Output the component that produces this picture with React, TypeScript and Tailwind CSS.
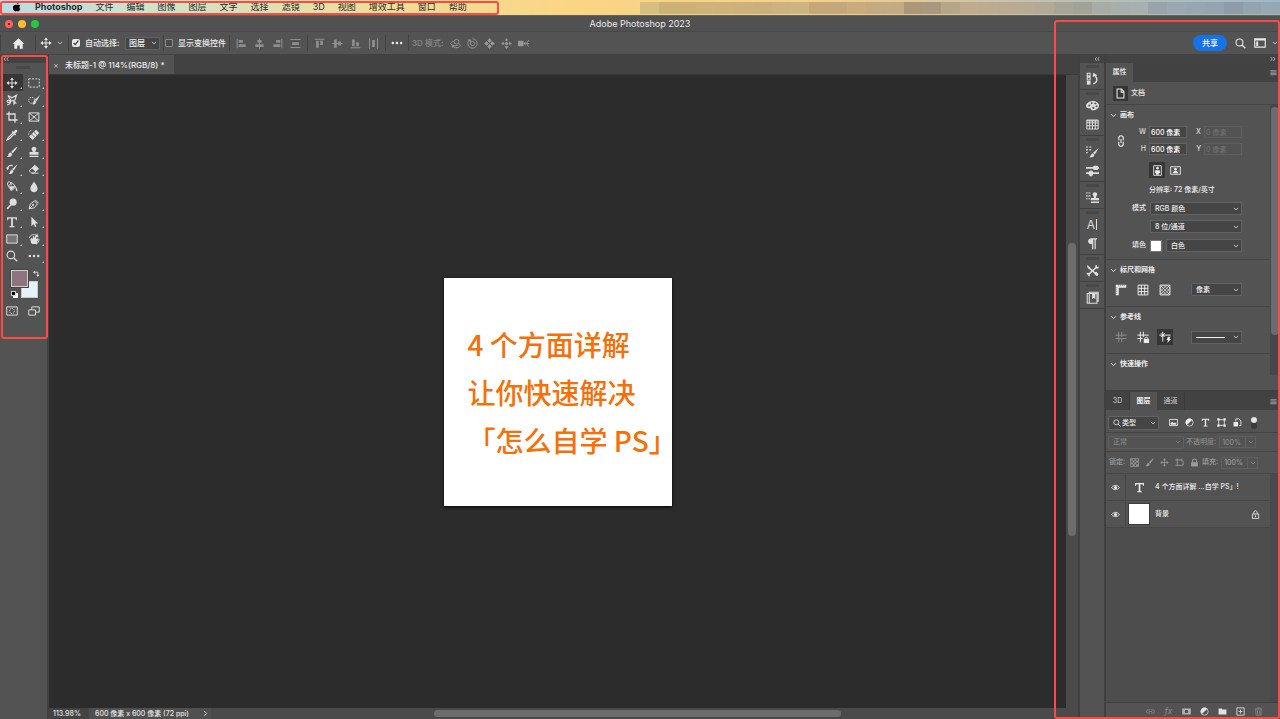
import type { ReactNode } from "react";
import clsx from "clsx";

interface IconProps {
  size?: string;
  className?: string;
  children: ReactNode;
}

function Icon({ size = "size-3", className, children }: IconProps) {
  return (
    <svg
      viewBox="0 0 16 16"
      className={clsx("block shrink-0", size, className)}
      fill="none"
      stroke="currentColor"
      strokeWidth="1.3"
      aria-hidden="true"
    >
      {children}
    </svg>
  );
}

const S = { fill: "currentColor", stroke: "none" };

// shapes, all on a 16x16 grid
const shapes = {
  apple: (
    <g {...S}>
      <path d="M11.8 8.400c0-1.500 1.100-2.200 1.700-2.600-1-1.400-2.500-1.600-3-1.600-1.100 0-1.900.6-2.500.6-.6 0-1.300-.6-2.300-.6C3.200 4.200 1.500 5.800 1.500 8.700c0 3 2.100 6.300 3.800 6.300.9 0 1.300-.6 2.400-.6 1.100 0 1.400.6 2.300.6 1.600 0 2.900-2.600 3.300-3.700-1-.5-1.500-1.600-1.500-2.900z" />
      <path d="M9.700 3.100c.6-.7.9-1.600.8-2.500-1.400.1-3 1.400-2.800 3.300.8 0 1.500-.3 2-.8z" />
    </g>
  ),
  home: <path {...S} d="M8 1.500 0.800 8.300h2v6.200h3.700v-4h3v4h3.700V8.300h2z" />,
  move: (
    <g>
      <path d="M8 3v10M3 8h10" />
      <path {...S} d="M8 .5 10.600 4H5.400zM8 15.500 10.600 12H5.400zM.5 8 4 5.400v5.200zM15.500 8 12 5.400v5.200z" />
    </g>
  ),
  marquee: <path strokeDasharray="2.600 1.800" d="M1 2.500h14v11H1z" />,
  lasso: (
    <g>
      <path strokeWidth="1.500" d="M2.500 2 8 5l6-3.500-2 6.500-5 1.500L2.500 2M7 9.500c-2 2.500-5 2-5.500.5S4 7 5.500 9.500 4 14.500 1.500 14.500" />
      <path {...S} d="M9.500 7.500l5.500 5-2.700.2L10 15z" />
    </g>
  ),
  quickSelect: (
    <g>
      <circle cx="5" cy="8.500" r="4" strokeDasharray="1.800 1.300" />
      <path {...S} d="M16 1.500 11.500 9.500 9 7.500zM8.500 8l2.500 2c-.3 3.500-3 4.500-5.500 3.800C7.300 12.500 7 9.500 8.500 8z" />
    </g>
  ),
  crop: <path strokeWidth="1.700" d="M4 .5V12h11.500M.5 4H12v11.500" />,
  frame: <path d="M1.500 2.500h13v11h-13zM1.500 2.500l13 11M14.500 2.500l-13 11" />,
  eyedropper: (
    <g>
      <path strokeWidth="1.500" d="M9 5.500 3 11.500 1.500 14.500 4.500 13l6-6" />
      <path {...S} d="M7.500 4l1.500-1.500 1.300 1.200 1.800-2.300c1.800-1.500 4 .8 2.500 2.500L12.300 5.700l1.200 1.300L12 8.500z" />
    </g>
  ),
  heal: (
    <g>
      <path {...S} d="M10.800 1 15 5.200 6.200 14.500 1.500 10z" />
      <path stroke="#535353" strokeWidth="1" d="M7.600 3.900l4.400 4.400M4.700 6.800l4.400 4.400" />
      <path strokeDasharray="1.500 1.300" d="M1 7.500C.5 4 3 1.500 6 1.500" />
    </g>
  ),
  brush: (
    <path {...S} d="M15.200.8c.8.7-4.600 7.600-6.400 9L7 8C8.400 6.200 14.400.1 15.200.8zM6.300 8.700l1.900 1.900c.2 3.200-3.400 4.700-7 3.800 2-.7 1.600-2 2.200-3.700.4-1.300 1.700-2 2.900-2z" />
  ),
  stamp: (
    <path {...S} d="M8 1c2 0 3.200 1.300 3.200 2.900 0 1.700-1.600 2.100-1.600 4.100H14v3.500H2V8h4.400c0-2-1.600-2.400-1.600-4.100C4.800 2.300 6 1 8 1zM2 13h12v1.800H2z" />
  ),
  historyBrush: (
    <g>
      <path {...S} d="M15.500 1.500 10.500 10 8 8zM7.500 8.500l2.400 2c-.2 3.200-3 4.500-6.400 4 2-1 1.700-4.500 4-6z" />
      <path strokeWidth="1.500" d="M2 7.500C2.500 3.500 6 2.500 9 3.500" />
      <path {...S} d="M0 6l4.500 0L2 9.500z" />
    </g>
  ),
  eraser: (
    <g>
      <path d="M5 13.500 1.500 10.500 9 3l5 4.500-6 6zM5 13.500h9" />
      <path {...S} d="M9 3l5 4.500-4 4L5 7z" />
    </g>
  ),
  bucket: (
    <g>
      <path d="M3 6.500 8 2l5 6-6 5zM3 6.500C1 4 2 1 4 1s3 2 3 5" />
      <path {...S} d="M4 7h9l-6 5zM13 8c2 2 2.500 3.500 2 6-1.500-.5-2.500-3-2-6z" />
    </g>
  ),
  drop: <path {...S} d="M8 .8c1.500 3.200 4.800 5.600 4.800 9.200 0 3-2.200 5-4.800 5s-4.800-2-4.800-5C3.200 6.400 6.500 4 8 .8z" />,
  dodge: (
    <g>
      <circle {...S} cx="9.500" cy="5.500" r="4.700" />
      <path strokeWidth="2" d="M6.500 9 1.500 14.500" />
    </g>
  ),
  pen: (
    <g>
      <path d="M1.500 14.500 3 8l5.500-4 4 4L8.500 13zM1.500 14.500l5-5M9.500 2.500l4.500 4.500" />
      <circle {...S} cx="7" cy="9" r="1.300" />
    </g>
  ),
  type: <path {...S} d="M1.500 1.500h13V5.500h-1.200L12.500 3.200H9.200v10l2.300.5v1.300h-7v-1.300l2.300-.5v-10H3.500L2.700 5.500H1.500z" />,
  pathArrow: <path {...S} d="M4.500 1v12.500l3-2.700 1.800 4 2-.9-1.800-3.900h4z" />,
  rectangle: <path fill="#777" d="M1 2.500h14v11H1z" />,
  rotate: (
    <g>
      <path {...S} d="M4 13 3 8l2-1.500L6.500 8V4.500L8 4l1 3 .5-3.200L11 4v4l2-1 .8 1-2.300 6.500H5.500z" />
      <path d="M2 6.500C3 2 8 1 12 3.500M14.500 7.500c.5 3-1 6-3.500 7.500" />
      <path {...S} d="M12.500.5l1.500 5L9.500 5z" />
    </g>
  ),
  zoom: (
    <g>
      <circle cx="6.500" cy="6.500" r="5" strokeWidth="1.500" />
      <path strokeWidth="1.800" d="M10.200 10.200 15 15" />
    </g>
  ),
  dots: (
    <g {...S}>
      <circle cx="2.500" cy="8" r="1.700" />
      <circle cx="8" cy="8" r="1.700" />
      <circle cx="13.500" cy="8" r="1.700" />
    </g>
  ),
  swap: (
    <g>
      <path strokeWidth="2" d="M4 5h7v7" />
      <path {...S} d="M5 1v8L0 5zM7 11h8l-4 5z" />
    </g>
  ),
  quickMask: (
    <g>
      <path d="M1 2.500h14v11H1z" />
      <circle cx="8" cy="8" r="3.300" strokeDasharray="1.500 1" />
    </g>
  ),
  screenMode: (
    <g>
      <path d="M5 2.500h10v7H5z" />
      <path fill="#535353" d="M1 6.500h9v7H1z" />
    </g>
  ),
  chevron: <path strokeWidth="2" d="M2.500 5 8 10.500 13.500 5" />,
  alignLeft: <path {...S} d="M1 1h1.500v14H1zM4 3h6v4H4zM4 9h10v4H4z" />,
  alignCenter: <path {...S} d="M7.300.5h1.400V3H11v4H8.700v2H14v4H8.700v2.500H7.300V13H2V9h5.300V7H5V3h2.300z" />,
  alignRight: <path {...S} d="M13.500 1H15v14h-1.500zM6 3h6v4H6zM2 9h10v4H2z" />,
  distribute: <path {...S} d="M.5 1.500h15V3H.5zM3 6h10v4H3zM.5 13h15v1.500H.5z" />,
  alignTop: <path {...S} d="M1 1h14v1.500H1zM3 4h4v10H3zM9 4h4v6H9z" />,
  alignMiddle: <path {...S} d="M.5 7.300H3V2h4v5.300h2V5h4v2.300h2.500v1.400H13V11H9V8.700H7V14H3V8.700H.5z" />,
  alignBottom: <path {...S} d="M1 13.500h14V15H1zM3 2h4v10H3zM9 6h4v6H9z" />,
  distributeV: <path {...S} d="M1.500.5H3v15H1.500zM6 3h4v10H6zM13 .5h1.500v15H13z" />,
  orbit3d: (
    <g>
      <circle cx="9.500" cy="5.500" r="3.500" />
      <path d="M5.500 5C1 6 0 8 2 9.500s5 2.500 9 1.500M12.500 8c3 1.500 3 4.500 0 5.500s-5 1-8-1" />
      <path {...S} d="M3 14.500 2.500 10l4 1.500z" />
    </g>
  ),
  roll3d: (
    <g>
      <circle cx="8" cy="8" r="3" />
      <path d="M3.200 3.200A6.800 6.800 0 1 0 8 1.200" />
      <path {...S} d="M0.500 2h5v4.500z" />
    </g>
  ),
  pan3d: (
    <path fill="currentColor" d="M8 .8 10.500 4 8 6.500 5.500 4zM8 9.500l2.500 2.500L8 15.200 5.500 12zM.8 8 4 5.500 6.500 8 4 10.500zM9.500 8 12 5.500 15.200 8 12 10.500z" />
  ),
  slide3d: (
    <g>
      <circle {...S} cx="8" cy="8" r="2.200" />
      <path d="M8 3v10M2 8h12" strokeDasharray="2 1" />
      <path {...S} d="M8 0l2.500 3.500h-5zM8 16l3-4H5zM0 8l4-2.500v5zM16 8l-4-2.500v5z" />
    </g>
  ),
  camera3d: (
    <g>
      <path {...S} d="M0 4h8v8H0zM8 8l3-3v6z" />
      <path d="M15.500 3 12.500 8l3 5M12.500 8H16" />
    </g>
  ),
  workspace: (
    <g>
      <path strokeWidth="1.500" d="M1 2.500h14v11H1zM1 4h14" />
      <path {...S} d="M3 6h2.500v6H3z" />
    </g>
  ),
  history: (
    <g>
      <path d="M1.500 1.500H5V5H1.500zM1.500 6.300H5v3.500H1.500z" />
      <path {...S} d="M1 11h4.600v4.500H1z" />
      <path strokeWidth="1.800" d="M9 14.500c5-1.500 5.500-6 2.500-9.500" />
      <path {...S} d="M8 6 9 1l5 3z" />
    </g>
  ),
  palette: (
    <g>
      <path {...S} d="M8 2.500c4.500 0 8 2.200 8 5.500s-3.500 6-8 6c-2 0-1.500-2.500-3.500-2.500S0 11 0 8.500s3.500-6 8-6z" />
      <g fill="#535353" stroke="none">
        <circle cx="4" cy="8" r="1.200" />
        <circle cx="7" cy="5.200" r="1.200" />
        <circle cx="11.500" cy="5.400" r="1.200" />
        <circle cx="13" cy="8.800" r="1.200" />
        <circle cx="9" cy="10.800" r="1.400" />
      </g>
    </g>
  ),
  swatches: <path strokeWidth="1.200" d="M1 2.500h14v11H1zM1 6h14M1 9.500h14M4.500 2.500v11M8 2.500v11M11.500 2.500v11M1 3.500h14" />,
  brushSettings: (
    <g>
      <path d="M0 2.500h2.500M0 6h2.500M0 9.500h2.500M4 2.500h2.500M4 6h2.500" />
      <path {...S} d="M16 3.500 11 11.500l-2.500-2zM8 10l2.500 2c-.5 3-4 3.700-6.500 3.300 1.800-1.200 1.800-4.300 4-5.300z" />
    </g>
  ),
  brushes: (
    <path {...S} d="M0 3.800h8L10 2h4l2 2v1.500l-2 2h-4L8 5.800H0zM0 10.200h3L5 8h2.500L9 10.200h7v2H9L7.500 15H5l-2-2.800H0z" />
  ),
  cloneSource: (
    <g>
      <path d="M0 2.500h2M0 6h2M0 9.500h2M3 2.500h2.500M3 6h2.500M3 9.500h2" />
      <path {...S} d="M11 1.500c1.700 0 2.800 1.200 2.800 2.500 0 1.500-1.500 2-1.500 4.500H16v3H6v-3h3.700C9.700 6 8.200 5.500 8.200 4c0-1.300 1.100-2.500 2.800-2.500zM6 13h10v1.800H6z" />
    </g>
  ),
  paragraph: <path {...S} d="M7 1.500h6.500V3H12v12h-1.500V3H9v12H7.500V9C4.500 9 2.500 7.500 2.500 5.200S4.500 1.500 7 1.500z" />,
  toolPresets: (
    <g>
      <path strokeWidth="1.800" d="M2 3l9.500 8.500M13 4 3.500 12.500" />
      <path {...S} d="M1 1l3 2.500L6 8 2.500 5zM11 10l2-.5L15.500 13 13.500 15 10.500 12.500z" />
      <path strokeWidth="2" d="M12.500 1.500v3H15.500M1 12.500c2-1.500 3.500 0 2.500 2.500" />
    </g>
  ),
  libraries: (
    <g>
      <path d="M4 2.500V1.500h11v11h-1M1.500 3h12v12h-12zM4 3v12" />
      <path {...S} d="M7.500 3.500h4V10l-2-1.700-2 1.700z" />
    </g>
  ),
  page: <path strokeWidth="1.500" d="M3 1.500h6.500l3.500 4v9H3zM9 1.500V6h4" />,
  link: (
    <path strokeWidth="1.500" d="M5 7V4a3 3 0 0 1 6 0v3M5 9v3a3 3 0 0 0 6 0V9M8 5.500v5" />
  ),
  portrait: (
    <g>
      <path d="M2.500 1h11v14h-11z" />
      <circle {...S} cx="8" cy="4.700" r="2" />
      <path {...S} d="M4.500 7.500h7V12H10v2H6v-2H4.500z" />
    </g>
  ),
  landscape: (
    <g>
      <path d="M1 2.500h14v11H1z" />
      <circle {...S} cx="8" cy="6" r="2" />
      <path {...S} d="M4 12c0-5 8-5 8 0z" />
    </g>
  ),
  ruler: (
    <g>
      <path {...S} d="M1 1h14v4H5v10H1z" />
      <path stroke="#535353" strokeWidth=".8" d="M5 1v2M7.500 1v2M10 1v2M12.500 1v2M1 5h2M1 7.500h2M1 10h2M1 12.500h2" />
    </g>
  ),
  grid: <path d="M1.500 1.500h13v13h-13zM1.500 5.800h13M1.500 10.200h13M5.800 1.500v13M10.200 1.500v13" />,
  pixelGrid: (
    <g>
      <path d="M1.500 1.500h13v13h-13z" />
      <path strokeWidth=".9" d="M1.500 5.500l4-4M1.500 10l8.500-8.500M1.500 14.500l13-13M6 14.500 14.500 6M10.500 14.500l4-4M5.500 14.500l-4-4M10 14.500 1.500 6M14.500 14.500l-13-13M14.500 10 6 1.500M14.500 5.500l-4-4" />
    </g>
  ),
  guides: <path d="M5 1v14M9 1v7M9 10.500V15M.5 5.500h15M.5 10h15" />,
  guidesLock: (
    <g>
      <path d="M4.500 1v14M8.500 1v7M.5 5.500h15M.5 10h7" />
      <path {...S} d="M9 10.500h7V16H9z" />
      <path d="M10.500 10.500c0-3 4-3 4 0" />
    </g>
  ),
  smartGuides: (
    <g>
      <path d="M5 1v13M.5 5.500h15M2.500 3l5 5M7.500 3l-5 5" />
      <path {...S} d="M12 7.500h3.500l-1.500 3h2L11 16l1-4h-2z" />
    </g>
  ),
  image: (
    <g>
      <path strokeWidth="1.500" d="M1 2.500h14v11H1z" />
      <path {...S} d="M3 12V9l3-2.500 2.500 3L11 8l2 2v2z" />
    </g>
  ),
  adjust: (
    <g>
      <circle cx="8" cy="8" r="6.500" />
      <path {...S} d="M12.600 3.400A6.500 6.500 0 1 0 3.400 12.600z" />
    </g>
  ),
  shape: (
    <g>
      <path strokeWidth="1.500" d="M3 3h10v10H3z" />
      <path {...S} d="M.5.5h4v4h-4zM11.500.5h4v4h-4zM.5 11.500h4v4h-4zM11.500 11.500h4v4h-4z" />
    </g>
  ),
  smartObject: (
    <g>
      <path strokeWidth="1.500" d="M5 6V1.500h5.500L14 5v8.500h-3" />
      <path {...S} d="M1 7h8v8H1z" />
    </g>
  ),
  checker: (
    <g>
      <path d="M1 1h14v14H1z" />
      <path {...S} d="M2 2h3v3H2zM8 2h3v3H8zM5 5h3v3H5zM11 5h3v3h-3zM2 8h3v3H2zM8 8h3v3H8zM5 11h3v3H5zM11 11h3v3h-3z" />
    </g>
  ),
  artboard: <path strokeWidth="1.500" d="M4 .5V13M.5 3.500H12l2.500 3V13H1M12 .5v6" />,
  lockFill: (
    <g>
      <path strokeWidth="1.800" d="M4.500 8V5c0-4.500 7-4.500 7 0v3" />
      <path {...S} d="M2 7.500h12V15H2z" />
    </g>
  ),
  lock: (
    <g>
      <path strokeWidth="1.500" d="M5 7V4.500c0-4 6-4 6 0V7M2.500 7h11v8h-11z" />
      <path {...S} d="M7 9.500h2v3H7z" />
    </g>
  ),
  eye: (
    <g>
      <path strokeWidth="1.600" d="M1 8c3.500-5 10.500-5 14 0-3.500 5-10.500 5-14 0z" />
      <circle {...S} cx="8" cy="8" r="2.700" />
    </g>
  ),
  chain: (
    <path strokeWidth="1.500" d="M7 5H4a3 3 0 0 0 0 6h3M9 5h3a3 3 0 0 1 0 6H9M5 8h6" />
  ),
  mask: (
    <path {...S} fillRule="evenodd" d="M.5 2.500h15v11H.5zM8 4.700a3.300 3.300 0 1 0 0 6.600 3.300 3.300 0 0 0 0-6.600z" />
  ),
  folder: <path {...S} d="M1 2.500h5.500L8 4.500h7v9H1z" />,
  plus: <path strokeWidth="1.500" d="M1.500 1.500h13v13h-13zM8 4.500v7M4.500 8h7" />,
  trash: <path strokeWidth="1.500" d="M1.500 3.500h13M5.500 3V1.500h5V3M3 4l.7 10.500h8.600L13 4M6.200 6v6M9.800 6v6" />,
  hamburger: <path {...S} d="M1 3h14v2H1zM1 6h14v2H1zM1 9h14v2H1zM1 12h14v2H1z" />,
  doubleLeft: <path strokeWidth="1.800" d="M7 3 3 8l4 5M14 3l-4 5 4 5" />,
  doubleRight: <path strokeWidth="1.800" d="M2 3l4 5-4 5M9 3l4 5-4 5" />,
};

type ShapeName = keyof typeof shapes;

interface IconButtonProps {
  name: ShapeName;
  label: string;
  className?: string;
  size?: string;
}

function IconButton({ name, label, className, size }: IconButtonProps) {
  return (
    <button type="button" aria-label={label} className={clsx("flex shrink-0 items-center justify-center", className)}>
      <Icon size={size}>{shapes[name]}</Icon>
    </button>
  );
}

interface DropdownProps {
  label: string;
  value: string;
  className?: string;
  pad?: string;
  disabled?: boolean;
}

function Dropdown({ label, value, className, pad = "pl-1", disabled }: DropdownProps) {
  return (
    <span className={clsx("relative flex shrink-0 rounded-[1px] border", disabled ? "border-[#5f5f5f] text-[#858585]" : "border-[#626262] bg-[#454545] text-[#f0f0f0]", className)}>
      <select aria-label={label} disabled={disabled} className={clsx("w-full appearance-none leading-[10px] outline-none", pad)}>
        <option>{value}</option>
      </select>
      <Icon size="size-[6px]" className="pointer-events-none absolute top-0 right-[2px] bottom-0 my-auto">
        {shapes.chevron}
      </Icon>
    </span>
  );
}

const menus = ["文件", "编辑", "图像", "图层", "文字", "选择", "滤镜", "3D", "视图", "增效工具", "窗口", "帮助"];

const mosaic = [
  "bg-[#d5bf80]", "bg-[#cdb277]", "bg-[#ceb175]", "bg-[#cfb379]", "bg-[#ceb27a]", "bg-[#cdb07a]",
  "bg-[#cab07d]", "bg-[#cbb280]", "bg-[#cdb483]", "bg-[#c6a878]", "bg-[#c4a87b]", "bg-[#c8ac7e]",
  "bg-[#c4aa80]", "bg-[#c4ab84]", "bg-[#ac967a]", "bg-[#a9977f]", "bg-[#b7a588]", "bg-[#bfac8c]",
  "bg-[#bcab90]", "bg-[#b9aa91]", "bg-[#b7ab94]", "bg-[#b2a996]", "bg-[#a8a497]", "bg-[#a2a297]",
  "bg-[#a9aba5]", "bg-[#a8aeab]", "bg-[#a7afaf]", "bg-[#98a3aa]", "bg-[#9ca8b1]", "bg-[#98a6b1]",
  "bg-[#94a3ae]", "bg-[#8e9ca9]", "bg-[#93a3af]", "bg-[#97a8b4]",
];

function MenuBar() {
  return (
    <nav className="relative flex h-4 shrink-0 items-start border-b border-[#686351] bg-[linear-gradient(to_right,#b6dde6,#cfe3ca_12%,#f0dd98_30%,#fbd584_45%,#f3cf8b_65%,#bdbfb0_82%,#9db9c9)] text-[9px] leading-[14px] text-[#25292b]">
      <div className="flex w-1/2 shrink-0 items-center pl-3">
        <Icon size="size-[10px]" className="mr-[13px] text-black">{shapes.apple}</Icon>
        <a href="#photoshop" className="mr-[13px] font-bold">Photoshop</a>
        <div className="flex gap-[13px]">
          {menus.map((menu) => (
            <a key={menu} href={`#${menu}`} className="whitespace-nowrap">{menu}</a>
          ))}
        </div>
      </div>
      <div className="mt-[2px] ml-auto flex h-[12px] w-[650px]">
        {mosaic.map((color) => (
          <span key={color} className={clsx("flex-1", color)} />
        ))}
      </div>
      <div className="absolute top-px left-0 h-[14px] w-[499px] rounded-[3px] border-2 border-[#fb4b46]" />
    </nav>
  );
}

function TitleBar() {
  return (
    <header className="relative flex h-4 shrink-0 items-center justify-center border-b border-[#484848] bg-[#515151] text-[9px] text-[#ececec]">
      <div className="absolute left-[5px] flex gap-[5px]">
        <button type="button" aria-label="关闭" className="flex size-2 items-center justify-center rounded-full bg-[#ff5f57]">
          <span className="size-[2px] rounded-full bg-[#7a1512]" />
        </button>
        <button type="button" aria-label="最小化" className="size-2 rounded-full bg-[#febc2e]" />
        <button type="button" aria-label="缩放" className="size-2 rounded-full bg-[#28c840]" />
      </div>
      <h1>Adobe Photoshop 2023</h1>
    </header>
  );
}

function Divider() {
  return <span className="h-4 w-px shrink-0 bg-[#434343]" />;
}

interface IconRowProps {
  names: ShapeName[];
  color?: string;
  cell?: string;
}

function IconRow({ names, color = "text-[#8e8e8e]", cell = "w-[18px]" }: IconRowProps) {
  return (
    <div className={clsx("flex", color)}>
      {names.map((name) => (
        <IconButton key={name} name={name} label={name} className={cell} size="size-[11px]" />
      ))}
    </div>
  );
}

function OptionsBar() {
  return (
    <div className="flex h-[23px] shrink-0 items-center border-b border-[#434343] bg-[#535353] text-[8px] font-medium text-[#eaeaea]">
      <Divider />
      <IconButton name="home" label="主页" className="w-[34px]" size="size-[13px]" />
      <Divider />
      <IconButton name="move" label="移动工具" className="w-[20px]" />
      <IconButton name="chevron" label="预设" className="mr-1 w-2" size="size-[6px]" />
      <Divider />
      <label className="flex w-[54px] items-center gap-[5px] pl-[3px] whitespace-nowrap">
        <input type="checkbox" defaultChecked className="size-2 accent-[#eaeaea]" />
        自动选择:
      </label>
      <Dropdown label="自动选择" value="图层" className="ml-[2px] h-[13px] w-[35px]" pad="pl-[3px]" />
      <span className="w-[3px]" />
      <Divider />
      <label className="flex w-[65px] items-center gap-[5px] pl-px whitespace-nowrap">
        <input type="checkbox" className="size-2 appearance-none rounded-[1px] border border-[#8b8b8b] bg-[#484848]" />
        显示变换控件
      </label>
      <Divider />
      <div className="flex w-[77px] pl-[2px]">
        <IconRow names={["alignLeft", "alignCenter", "alignRight", "distribute"]} />
      </div>
      <Divider />
      <div className="flex w-[77px] pl-[2px]">
        <IconRow names={["alignTop", "alignMiddle", "alignBottom", "distributeV"]} />
      </div>
      <Divider />
      <IconButton name="dots" label="更多" className="w-[22px]" />
      <Divider />
      <span className="w-[38px] pl-[3px] whitespace-nowrap text-[#8a8a8a]">3D 模式:</span>
      <IconRow names={["orbit3d", "roll3d", "pan3d", "slide3d", "camera3d"]} color="text-[#989898]" cell="w-[17px]" />
      <div className="ml-auto flex items-center">
        <button type="button" className="mr-[8px] h-4 w-[34px] rounded-full bg-[#1473e6] text-[8px] font-medium text-white">共享</button>
        <IconButton name="zoom" label="搜索" size="size-[11px]" className="mr-[8px]" />
        <IconButton name="workspace" label="工作区" className="mr-[6px]" />
        <IconButton name="chevron" label="工作区选项" size="size-[6px]" className="mr-[2px]" />
      </div>
    </div>
  );
}

const tools: [ShapeName, string][] = [
  ["move", "移动工具"], ["marquee", "矩形选框工具"],
  ["lasso", "套索工具"], ["quickSelect", "快速选择工具"],
  ["crop", "裁剪工具"], ["frame", "图框工具"],
  ["eyedropper", "吸管工具"], ["heal", "修复画笔工具"],
  ["brush", "画笔工具"], ["stamp", "仿制图章工具"],
  ["historyBrush", "历史记录画笔工具"], ["eraser", "橡皮擦工具"],
  ["bucket", "油漆桶工具"], ["drop", "模糊工具"],
  ["dodge", "减淡工具"], ["pen", "钢笔工具"],
  ["type", "文字工具"], ["pathArrow", "路径选择工具"],
  ["rectangle", "矩形工具"], ["rotate", "旋转视图工具"],
  ["zoom", "缩放工具"], ["dots", "编辑工具栏"],
];

// small triangle marking a tool group with hidden tools
function Corner() {
  return (
    <svg viewBox="0 0 3 3" className="absolute right-px bottom-[2px] size-[2px] fill-[#c4c4c4]" aria-hidden="true">
      <path d="M3 0v3H0z" />
    </svg>
  );
}

function Toolbar() {
  return (
    <aside className="relative flex w-[49px] shrink-0 flex-col border-r-2 border-[#404040] bg-[#535353] text-[#dedede]">
      <div className="flex h-[8px] items-center bg-[#434343] pl-[3px]">
        <Icon size="size-[6px]">{shapes.doubleLeft}</Icon>
      </div>
      <div className="mt-[3px] ml-4 h-[3px] w-[14px] bg-[#484848]" />
      <div className="mt-[5px] ml-px grid h-[191px] w-[44px] grid-cols-2 grid-rows-11">
        {tools.map(([name, label], index) => (
          <button
            key={name}
            type="button"
            aria-label={label}
            className={clsx("relative flex items-center justify-center rounded-[1px]", index === 0 && "bg-[#363636]")}
          >
            <Icon>{shapes[name]}</Icon>
            {name !== "frame" && name !== "zoom" && <Corner />}
          </button>
        ))}
      </div>
      <div className="relative mt-[5px] ml-[10px] h-[28px] w-[30px]">
        <button type="button" aria-label="背景色" className="absolute right-[2px] bottom-0 size-[17px] border border-[#c4cccf] bg-[#e3f3f8]" />
        <button type="button" aria-label="前景色" className="absolute top-0 left-px size-[17px] border border-[#cfcfcf] bg-[#8e747f] outline outline-[#444]" />
        <Icon size="size-[7px]" className="absolute top-0 right-0">{shapes.swap}</Icon>
        <span className="absolute bottom-0 left-[3px] size-[5px] bg-white" />
        <span className="absolute bottom-[2px] left-px size-[5px] border border-[#d0d0d0] bg-black" />
      </div>
      <div className="mt-[6px] ml-px grid h-[14px] w-[44px] grid-cols-2">
        <IconButton name="quickMask" label="快速蒙版" />
        <IconButton name="screenMode" label="屏幕模式" />
      </div>
      <div className="absolute top-0 left-px h-[284px] w-[47px] rounded-[3px] border-2 border-[#fb4b46]" />
    </aside>
  );
}

function DocumentArea() {
  return (
    <main className="flex min-w-0 flex-1 flex-col bg-[#424242]">
      <div className="flex h-5 shrink-0 border-b border-[#393939]">
        <div className="flex items-center bg-[#535353] pr-[9px] pl-[3px] text-[8px] font-medium whitespace-nowrap text-[#f0f0f0]">
          <button type="button" aria-label="关闭文档" className="w-[13px] pr-[5px] text-[#b5b5b5]">×</button>
          未标题-1 @ 114%(RGB/8) *
        </div>
      </div>
      <div className="flex min-h-0 flex-1">
        <div className="flex flex-1 items-center justify-center bg-[#2c2c2c]">
          <div className="size-[228px] bg-white pt-[42px] pl-[24px] font-['Noto_Sans_CJK_SC',sans-serif] text-[28px] leading-[48px] font-medium whitespace-nowrap text-[#f5700a] shadow-[0_1px_3px_#000]">
            <p>4 个方面详解</p>
            <p>让你快速解决</p>
            <p>「怎么自学 PS」</p>
          </div>
        </div>
        <div className="flex w-3 shrink-0 flex-col bg-[#4a4a4a] px-[2px]">
          <span className="flex-168" />
          <span className="flex-293 rounded-full bg-[#6c6c6c]" />
          <span className="flex-172" />
        </div>
      </div>
      <footer className="flex h-[11px] shrink-0 items-center bg-[#4a4a4a] text-[7px] font-medium whitespace-nowrap text-[#e6e6e6]">
        <span className="w-10 bg-[#434343] pl-1 leading-[11px]">113.98%</span>
        <span className="flex w-[122px] justify-between bg-[#505050] pr-[2px] pl-[6px] leading-[11px]">
          600 像素 x 600 像素 (72 ppi)
          <Icon size="size-[7px]" className="my-auto -rotate-90">{shapes.chevron}</Icon>
        </span>
        <div className="flex h-[7px] flex-1">
          <span className="flex-223" />
          <span className="flex-407 rounded-full bg-[#6c6c6c]" />
          <span className="flex-237" />
        </div>
      </footer>
    </main>
  );
}

const dockGroups: (ShapeName | "character")[][] = [
  ["history"],
  ["palette", "swatches"],
  ["brushSettings", "brushes"],
  ["cloneSource"],
  ["character", "paragraph"],
  ["toolPresets"],
  ["libraries"],
];

function Dock() {
  return (
    <aside className="w-7 shrink-0 border-x-2 border-[#404040] bg-[#535353] text-[#dedede]">
      <div className="flex h-[8px] items-center justify-end bg-[#434343] pr-1">
        <Icon size="size-[6px]">{shapes.doubleLeft}</Icon>
      </div>
      {dockGroups.map((group) => (
        <div key={group[0]} className="border-b border-[#404040] pt-[2px] pb-px">
          <div className="mx-auto mb-px h-[3px] w-[13px] bg-[#484848]" />
          {group.map((name) =>
            name === "character" ? (
              <button key={name} type="button" aria-label="字符" className="flex h-[19px] w-full items-center justify-center text-[12px]">
                A<span className="ml-px h-[11px] w-px bg-current" />
              </button>
            ) : (
              <IconButton key={name} name={name} label={name} className="h-[19px] w-full" size="size-[13px]" />
            )
          )}
        </div>
      ))}
    </aside>
  );
}

function Section({ title, className, children }: { title: string; className?: string; children?: ReactNode }) {
  return (
    <section className={clsx("border-[#444]", className)}>
      <h2 className="flex h-[21px] items-center gap-[3px] pl-1 font-bold">
        <Icon size="size-[7px]">{shapes.chevron}</Icon>
        {title}
      </h2>
      {children}
    </section>
  );
}

function SizeField({ label, value, disabled }: { label: string; value: string; disabled?: boolean }) {
  return (
    <label className="flex items-center justify-end gap-[3px] text-[#dcdcdc]">
      {label}
      <input
        defaultValue={value}
        disabled={disabled}
        className={clsx("h-3 w-[38px] border pl-[1px] leading-[10px] outline-none", disabled ? "border-[#5f5f5f] text-[#707070]" : "border-[#626262] bg-[#454545] text-white")}
      />
    </label>
  );
}

function Properties() {
  return (
    <div className="flex h-[327px] shrink-0 flex-col">
      <div className="flex h-[19px] shrink-0 bg-[#424242]">
        <button type="button" className="w-[27px] bg-[#535353]">属性</button>
        <IconButton name="hamburger" label="面板菜单" size="size-[7px]" className="mr-[3px] ml-auto text-[#9c9c9c]" />
      </div>
      <div className="flex h-[23px] shrink-0 items-center gap-[3px] border-b border-[#444] pl-[7px]">
        <span className="flex size-[15px] items-center justify-center bg-[#363636]">
          <Icon size="size-[11px]">{shapes.page}</Icon>
        </span>
        文档
      </div>
      <div className="flex min-h-0 flex-1">
        <div className="flex-1">
          <Section title="画布" className="h-[155px] border-b">
            <div className="flex items-center">
              <span className="flex w-[30px] justify-center">
                <Icon>{shapes.link}</Icon>
              </span>
              <div className="grid grid-cols-[51px_55px] gap-y-[5px]">
                <SizeField label="W" value="600 像素" />
                <SizeField label="X" value="0 像素" disabled />
                <SizeField label="H" value="600 像素" />
                <SizeField label="Y" value="0 像素" disabled />
              </div>
            </div>
            <div className="mt-[7px] ml-[43px] flex gap-[2px]">
              <IconButton name="portrait" label="纵向" className="size-4 bg-[#363636]" size="size-[11px]" />
              <IconButton name="landscape" label="横向" className="size-4" size="size-[11px]" />
            </div>
            <p className="mt-[6px] ml-[43px] leading-[12px]">分辨率: 72 像素/英寸</p>
            <div className="mt-[6px] ml-[26px] flex items-center gap-1">
              模式
              <Dropdown label="模式" value="RGB 颜色" className="h-[13px] w-[92px]" />
            </div>
            <div className="mt-[5px] ml-[44px]">
              <Dropdown label="位深度" value="8 位/通道" className="h-[13px] w-[92px]" />
            </div>
            <div className="mt-[6px] ml-[26px] flex items-center gap-1">
              填色
              <span className="size-[12px] border border-[#777] bg-white" />
              <Dropdown label="填色" value="白色" className="h-[13px] w-[76px]" />
            </div>
          </Section>
          <Section title="标尺和网格" className="h-[47px] border-b">
            <div className="mt-[2px] flex items-center gap-[10px] pl-[9px]">
              <IconButton name="ruler" label="标尺" />
              <IconButton name="grid" label="网格" />
              <IconButton name="pixelGrid" label="像素网格" />
              <Dropdown label="单位" value="像素" className="ml-[10px] h-[13px] w-[51px]" />
            </div>
          </Section>
          <Section title="参考线" className="h-[47px] border-b">
            <div className="mt-px flex items-center pl-[9px]">
              <IconButton name="guides" label="参考线" className="mr-[10px] text-[#8c8c8c]" />
              <IconButton name="guidesLock" label="锁定参考线" className="mr-[8px]" />
              <IconButton name="smartGuides" label="智能参考线" className="mr-[18px] size-4 bg-[#363636]" />
              <span className="relative flex h-[13px] w-[51px] items-center border border-[#626262] bg-[#454545]">
                <select aria-label="线型" className="absolute inset-0 appearance-none opacity-0">
                  <option>实线</option>
                </select>
                <span className="ml-[4px] h-px w-[29px] bg-[#f0f0f0]" />
                <Icon size="size-[6px]" className="mr-[2px] ml-auto">{shapes.chevron}</Icon>
              </span>
            </div>
          </Section>
          <Section title="快速操作" />
        </div>
        <div className="mb-[15px] w-[10px] bg-[#474747] px-px pt-[2px]">
          <div className="h-[228px] rounded-full bg-[#6c6c6c]" />
        </div>
      </div>
    </div>
  );
}

function Percent({ label }: { label: string }) {
  return (
    <label className="flex items-center gap-[3px] whitespace-nowrap">
      {label}
      <span className="flex">
        <input disabled defaultValue="100%" className="h-3 w-[27px] border border-[#5f5f5f] pl-[2px] outline-none" />
        <span className="flex h-3 w-[10px] items-center justify-center border border-l-0 border-[#5f5f5f]">
          <Icon size="size-[6px]">{shapes.chevron}</Icon>
        </span>
      </span>
    </label>
  );
}

interface LayerRowProps {
  name: string;
  locked?: boolean;
  thumb: ReactNode;
}

function LayerRow({ name, locked, thumb }: LayerRowProps) {
  return (
    <li className="flex h-[27px] items-center border-b border-[#464646] bg-[#535353]">
      <IconButton name="eye" label="可见性" className="h-full w-[20px] border-r border-[#464646]" size="size-[9px]" />
      <span className="ml-[2px] flex size-[22px] items-center justify-center">{thumb}</span>
      <span className="ml-[5px] whitespace-nowrap">{name}</span>
      {locked && <Icon size="size-[9px]" className="mr-[10px] ml-auto">{shapes.lock}</Icon>}
    </li>
  );
}

function Layers() {
  return (
    <div className="flex min-h-0 flex-1 flex-col border-t-2 border-[#404040]">
      <div className="flex h-[18px] shrink-0 bg-[#424242]">
        <button type="button" className="w-[24px] border-r border-[#3b3b3b] text-[#bcbcbc]">3D</button>
        <button type="button" className="w-[27px] bg-[#535353] font-bold">图层</button>
        <button type="button" className="w-[28px] border-r border-[#3b3b3b] text-[#bcbcbc]">通道</button>
        <IconButton name="hamburger" label="面板菜单" size="size-[7px]" className="mr-[3px] ml-auto text-[#9c9c9c]" />
      </div>
      <div className="flex h-[23px] shrink-0 items-center border-b border-[#444] pt-[3px] pl-[2px]">
        <span className="relative">
          <Dropdown label="图层过滤" value="类型" className="h-[14px] w-[51px]" pad="pl-[13px]" />
          <Icon size="size-2" className="pointer-events-none absolute top-[3px] left-[5px]">{shapes.zoom}</Icon>
        </span>
        <div className="ml-[10px] flex gap-[7px]">
          <IconButton name="image" label="像素图层" size="size-[9px]" />
          <IconButton name="adjust" label="调整图层" size="size-[9px]" />
          <IconButton name="type" label="文字图层" size="size-[9px]" />
          <IconButton name="shape" label="形状图层" size="size-[9px]" />
          <IconButton name="smartObject" label="智能对象" size="size-[9px]" />
        </div>
        <button type="button" aria-label="过滤开关" className="ml-[9px] h-3 w-[6px] rounded-full bg-[#3c3c3c]">
          <span className="mb-[6px] block size-[6px] rounded-full bg-[#e4e4e4]" />
        </button>
      </div>
      <div className="flex h-[19px] shrink-0 items-center gap-[2px] border-b border-[#474747] pl-[2px] text-[#8a8a8a]">
        <Dropdown label="混合模式" value="正常" disabled className="h-[13px] w-[76px]" />
        <Percent label="不透明度:" />
      </div>
      <div className="flex h-[22px] shrink-0 items-center border-b border-[#474747] pl-[3px] text-[#9c9c9c]">
        <span className="w-[21px] whitespace-nowrap">锁定:</span>
        <div className="mr-[3px] flex gap-[6px]">
          <IconButton name="checker" label="锁定透明像素" size="size-[9px]" />
          <IconButton name="brush" label="锁定图像像素" size="size-[9px]" />
          <IconButton name="move" label="锁定位置" size="size-[9px]" />
          <IconButton name="artboard" label="防止自动嵌套" size="size-[9px]" />
          <IconButton name="lockFill" label="锁定全部" size="size-[9px]" />
        </div>
        <Percent label="填充:" />
      </div>
      <div className="flex min-h-0 flex-1 bg-[#4a4a4a]">
        <ul className="mr-[10px] flex-1 bg-[#4d4d4d]">
          <LayerRow name="4 个方面详解 ...自学 PS」!" thumb={<Icon size="size-[11px]">{shapes.type}</Icon>} />
          <LayerRow name="背景" locked thumb={<span className="size-[22px] border border-[#3c3c3c] bg-white" />} />
        </ul>
      </div>
      <div className="flex h-[17px] shrink-0 items-center justify-end gap-[9px] border-t border-[#404040] bg-[#535353] pr-[17px] text-[#e2e2e2]">
        <IconButton name="chain" label="链接图层" size="size-[9px]" className="text-[#8a8a8a]" />
        <button type="button" className="w-[9px] text-[8px] text-[#8a8a8a] italic">fx</button>
        <IconButton name="mask" label="添加蒙版" size="size-[9px]" className="text-[#b5b5b5]" />
        <IconButton name="adjust" label="新建调整图层" size="size-[9px]" />
        <IconButton name="folder" label="新建组" size="size-[9px]" />
        <IconButton name="plus" label="新建图层" size="size-[9px]" />
        <IconButton name="trash" label="删除图层" size="size-[9px]" className="text-[#8a8a8a]" />
      </div>
    </div>
  );
}

export default function App() {
  return (
    <div className="relative flex h-screen flex-col overflow-hidden bg-[#535353] font-['Inter','Noto_Sans_CJK_SC',sans-serif]">
      <MenuBar />
      <TitleBar />
      <OptionsBar />
      <div className="flex min-h-0 flex-1">
        <Toolbar />
        <DocumentArea />
        <Dock />
        <aside className="flex w-[174px] shrink-0 flex-col bg-[#535353] text-[7px] font-medium text-[#ececec]">
          <div className="flex h-[8px] shrink-0 items-center justify-end bg-[#434343] pr-1">
            <Icon size="size-[6px]">{shapes.doubleRight}</Icon>
          </div>
          <Properties />
          <Layers />
        </aside>
      </div>
      <div className="pointer-events-none absolute top-5 right-0 bottom-0 w-[226px] rounded-[3px] border-2 border-[#fb4b46]" />
    </div>
  );
}
